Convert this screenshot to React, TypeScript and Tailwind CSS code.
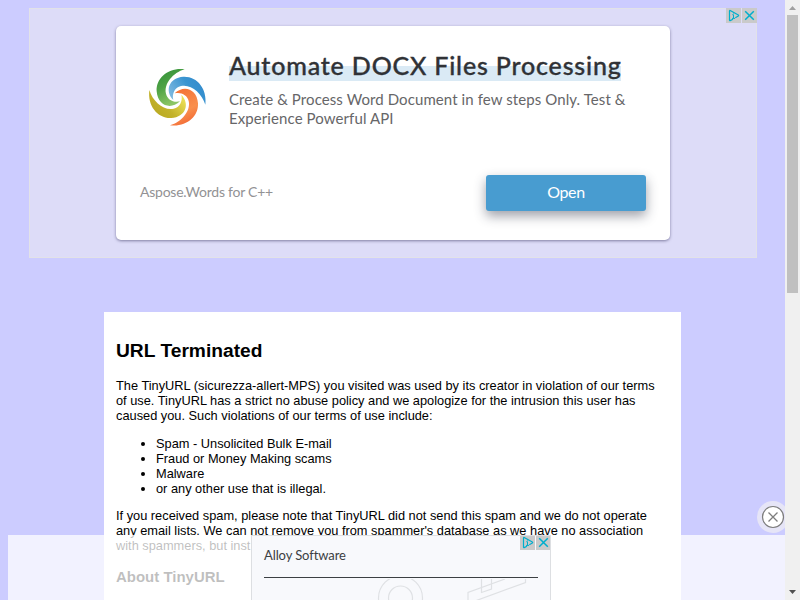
import React from 'react';

const arm = 'M134 28 C86 22 48 53 50 94 C53 137 92 151 120 124 C101 129 82 119 78 101 C71 72 99 38 134 28Z';

function Logo() {
  return (
    <svg className="block h-[75px] w-[75px]" viewBox="0 0 225 225">
      <defs>
        <linearGradient id="green" x1="0" y1="0" x2="0.4" y2="1"><stop stopColor="#2f8f37" /><stop offset="0.5" stopColor="#4fa245" /><stop offset="1" stopColor="#8cc665" /></linearGradient>
        <linearGradient id="blue" x1="0" y1="0" x2="0.5" y2="1"><stop stopColor="#3088cc" /><stop offset="0.5" stopColor="#3994d0" /><stop offset="1" stopColor="#79b6df" /></linearGradient>
        <linearGradient id="orange" x1="0" y1="0" x2="0.4" y2="1"><stop stopColor="#f0592a" /><stop offset="0.5" stopColor="#f9904e" /><stop offset="1" stopColor="#f5763a" /></linearGradient>
        <linearGradient id="yellow" x1="0" y1="0" x2="0.7" y2="1"><stop stopColor="#b5a41e" /><stop offset="0.5" stopColor="#c3b32b" /><stop offset="1" stopColor="#f0e45a" /></linearGradient>
      </defs>
      <path d={arm} fill="url(#green)" />
      <path d={arm} fill="url(#blue)" transform="rotate(90 112 112)" />
      <path d={arm} fill="url(#orange)" transform="rotate(180 112 112)" />
      <path d={arm} fill="url(#yellow)" transform="rotate(270 112 112)" />
    </svg>
  );
}

function AdChoices() {
  return (
    <div className="flex gap-px">
      <svg className="h-[15px] w-[15px] bg-[#cacaca]" viewBox="0 0 15 15" fill="none" stroke="#00aecd">
        <path d="M7 11.3 L4.2 12.6 Q3.5 12.8 3.5 12 V3 Q3.5 2.2 4.2 2.6 L12.3 7.1 Q13 7.6 12.3 8.1 L9.3 9.8" strokeWidth="1.2" />
        <path d="M7.5 4.5v1M6.3 6.7h1.2v3.6M6 10.4h3" />
      </svg>
      <svg className="h-[15px] w-[15px] bg-[#cacaca]" viewBox="0 0 15 15" fill="none" stroke="#00aecd" strokeWidth="1.5">
        <path d="M3.2 3.2 L11.8 11.8 M11.8 3.2 L3.2 11.8" />
      </svg>
    </div>
  );
}

function TopAd() {
  return (
    <section className="relative ml-[29px] h-[250px] w-[728px] border border-[#e2e2e8] bg-[#dddcf8] pt-[17px] font-['Lato',sans-serif]">
      <div className="ml-[86px] h-[214px] w-[554px] rounded-[5px] bg-white shadow-[0_1px_3px_rgba(50,45,90,0.55)]">
        <div className="flex h-[149px]">
          <div className="ml-6 mt-[34px] w-[89px]"><Logo /></div>
          <div className="pt-[22px]">
            <h1 className="h-[33px] w-[392px] whitespace-nowrap bg-[linear-gradient(transparent_18px,#daeaf5_18px)] text-[25px] font-medium leading-[35px] tracking-[0.82px] text-[#303236] [-webkit-text-stroke:0.35px_#303236]">Automate DOCX Files Processing</h1>
            <p className="mt-[9px] whitespace-nowrap text-[15px] leading-[19px] tracking-[0.09px] text-[#666668]">Create &amp; Process Word Document in few steps Only. Test &amp;<br />Experience Powerful API</p>
          </div>
        </div>
        <div className="flex items-start justify-between pl-6 pr-6">
          <span className="pt-[7px] text-[14px] leading-5 tracking-[-0.25px] text-[#929294]">Aspose.Words for C++</span>
          <button className="h-9 w-40 rounded-[3px] bg-[#489cd0] pb-[3px] text-[16px] tracking-[-0.4px] text-white shadow-[0_5px_12px_rgba(40,45,65,0.45)]">Open</button>
        </div>
      </div>
      <div className="absolute -right-px -top-px"><AdChoices /></div>
    </section>
  );
}

function BottomAd() {
  return (
    <aside className="absolute bottom-0 left-2 flex h-[65px] w-[777px] justify-center bg-white/75">
      <div className="relative ml-[9px] h-[65px] w-[300px] overflow-hidden border-x border-t border-[#dddfe2] bg-[#f8f9fc] font-['Lato',sans-serif]">
        <svg className="absolute left-0 top-[43px] h-[22px] w-[298px]" fill="none" stroke="#dfe1e4" strokeWidth="1.2">
          <circle cx="148.5" cy="19" r="22" /><circle cx="148.5" cy="19" r="12" />
          <path d="M216 22V13.500L253 0M229.500 0V13.500L239.500 10V0M223 22L273.500 3.500V0" />
        </svg>
        <div className="ml-3 mr-3 h-[42px] border-b border-[#3c4043] pt-[9px] text-[13px] leading-5 tracking-[-0.1px] text-[#3c4043]">Alloy Software</div>
        <div className="absolute -right-px -top-px"><AdChoices /></div>
      </div>
    </aside>
  );
}

function Scrollbar() {
  return (
    <div className="flex h-full w-[15px] shrink-0 flex-col items-center bg-[#f0f0f0]">
      <svg className="h-[15px] w-[15px] shrink-0" viewBox="0 0 15 15"><path d="M4 10 L7.5 6 L11 10Z" fill="#a0a0a0" /></svg>
      <div className="h-[278px] w-[11px] bg-[#c0c0c0]" />
      <svg className="mt-auto h-[15px] w-[15px]" viewBox="0 0 15 15"><path d="M4 5 L11 5 L7.5 9Z" fill="#505050" /></svg>
    </div>
  );
}

export default function App() {
  return (
    <div className="flex h-[600px] w-[800px] overflow-hidden bg-[#ccccff]">
      <div className="relative h-[600px] w-[785px] overflow-hidden pt-2">
        <TopAd />
        <main className="ml-[104px] mt-[54px] h-[400px] w-[577px] whitespace-nowrap bg-white px-3 pt-[27px] font-['Liberation_Sans',sans-serif] text-[12.8px] leading-[15px] text-black">
          <h2 className="text-[19.2px] font-bold leading-6">URL Terminated</h2>
          <p className="mt-[15px]">The TinyURL (sicurezza-allert-MPS) you visited was used by its creator in violation of our terms<br />of use. TinyURL has a strict no abuse policy and we apologize for the intrusion this user has<br />caused you. Such violations of our terms of use include:</p>
          <ul className="mt-[13px] list-disc pl-10">
            <li>Spam - Unsolicited Bulk E-mail</li>
            <li>Fraud or Money Making scams</li>
            <li>Malware</li>
            <li>or any other use that is illegal.</li>
          </ul>
          <p className="mt-3">If you received spam, please note that TinyURL did not send this spam and we do not operate<br />any email lists. We can not remove you from spammer's database as we have no association<br />with spammers, but inst</p>
          <h3 className="mt-[15px] text-[14.98px] font-bold leading-[17px]">About TinyURL</h3>
        </main>
        <BottomAd />
        <div className="absolute left-[757px] top-[501px] flex h-8 w-8 items-center justify-center rounded-full bg-[#e6e5f7]">
          <svg className="h-6 w-6" viewBox="0 0 24 24" fill="none" stroke="#7d7d7d">
            <circle cx="12" cy="12" r="10.5" fill="white" strokeWidth="1.2" /><path d="M7.5 7.5L16.5 16.5M16.5 7.5L7.5 16.5" strokeWidth="1.3" />
          </svg>
        </div>
      </div>
      <Scrollbar />
    </div>
  );
}
